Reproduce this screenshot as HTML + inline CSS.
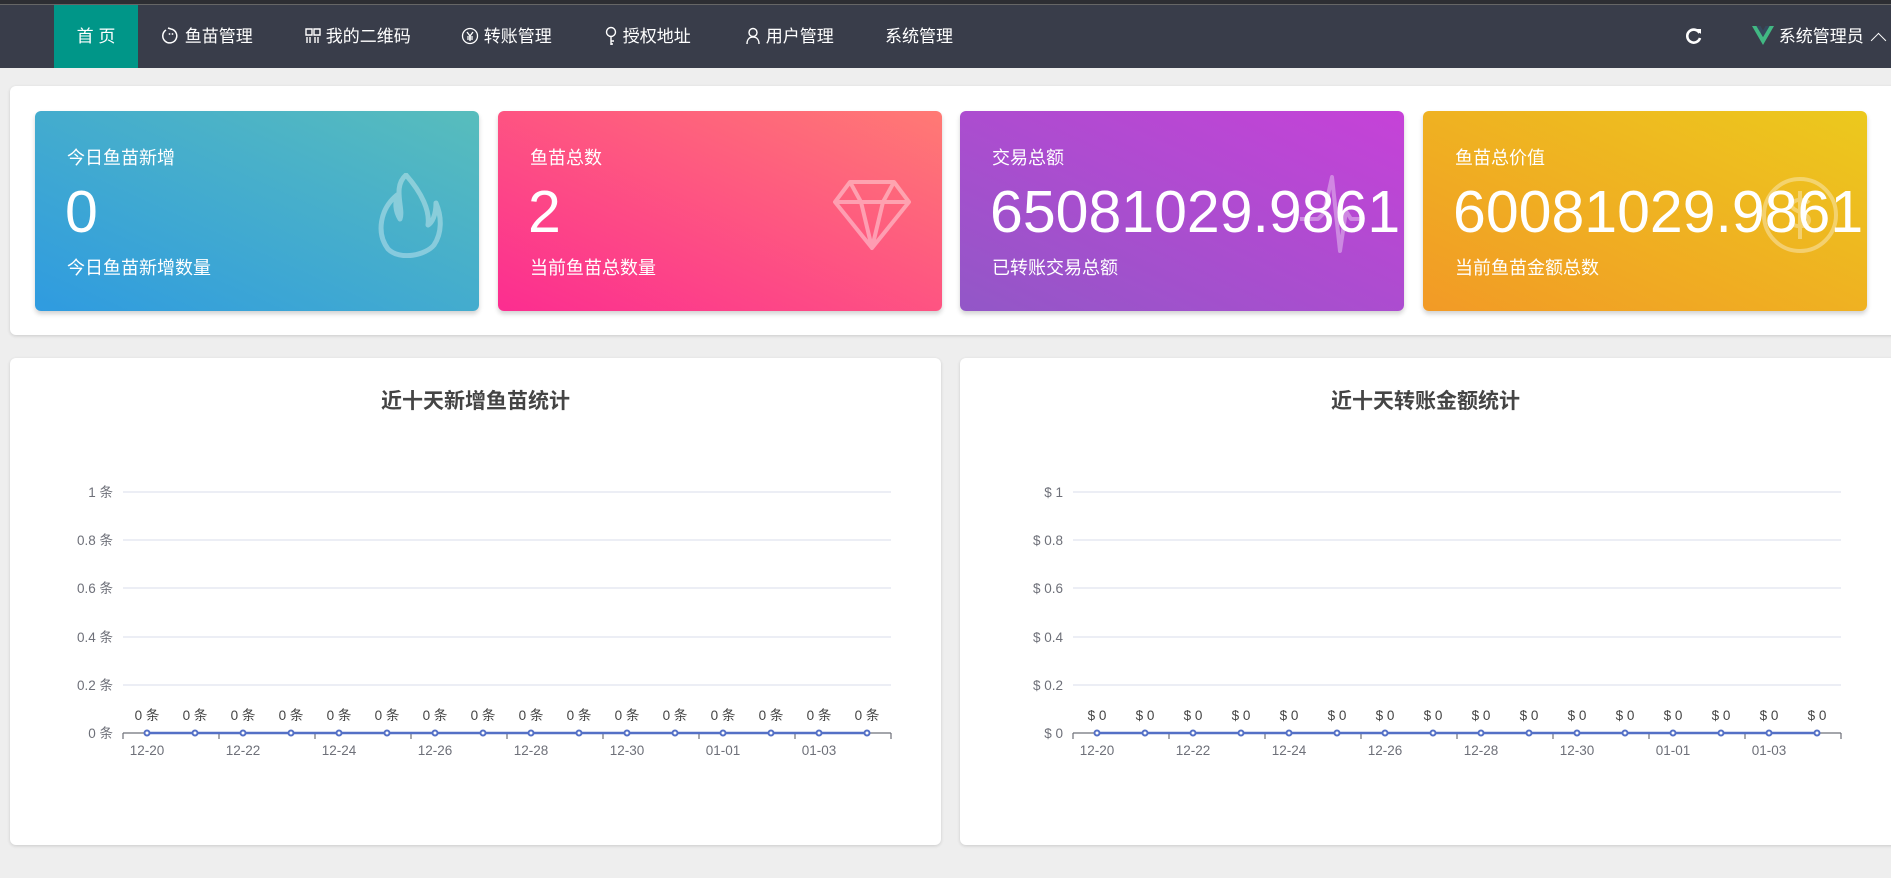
<!DOCTYPE html>
<html><head><meta charset="utf-8"><style>
*{margin:0;padding:0;box-sizing:border-box}
body{width:1891px;height:878px;background:#eeeeee;font-family:"Liberation Sans","Noto Sans CJK SC",sans-serif;position:relative;overflow:hidden}
.top{position:absolute;left:0;top:0;width:1891px;height:5px;background:#2d2e33;border-bottom:1px solid #666}
.nav{position:absolute;left:0;top:5px;width:1891px;height:63px;background:#393d4a;color:#fff;font-size:17px}
.nav .it{position:absolute;top:0;height:63px;line-height:63px;white-space:nowrap}
.home{left:54px;width:84px;background:#009688;text-align:center}
.panel{position:absolute;background:#fff;border-radius:6px;box-shadow:0 1px 3px rgba(0,0,0,.15)}
.card{position:absolute;top:111px;width:444px;height:200px;border-radius:6px;color:#fff;box-shadow:0 3px 5px rgba(0,0,0,.18);overflow:hidden}
.card .t{position:absolute;left:32px;top:33px;font-size:18px}
.card .n{position:absolute;left:30px;top:66px;font-size:59px;line-height:70px;white-space:nowrap}
.card .s{position:absolute;left:32px;top:143px;font-size:18px}
.card svg{position:absolute}
.ct{position:absolute;top:27px;width:100%;text-align:center;font-size:21px;font-weight:bold;color:#444}
.chart{position:absolute;left:0;top:0}
</style></head><body>
<div class="top"></div>
<div class="nav">
<div class="it home">首 页</div>
<div class="it" style="left:162px"><svg width="18" height="18" viewBox="0 0 18 18" style="vertical-align:-3px"><path d="M4 3A7 7 0 1 0 9 2M9 2L6 1" fill="none" stroke="#fff" stroke-width="1.5"/><circle cx="7.5" cy="7" r=".9" fill="#fff"/><circle cx="10.5" cy="7" r=".9" fill="#fff"/></svg> 鱼苗管理</div>
<div class="it" style="left:305px"><svg width="16" height="16" viewBox="0 0 16 16" style="vertical-align:-2px"><path d="M1 1h6v6H1zM9 1h6v6H9zM2 9v6M5 9v6M10 9v6M13 9v6" fill="none" stroke="#fff" stroke-width="1.4"/></svg> 我的二维码</div>
<div class="it" style="left:461px"><svg width="18" height="18" viewBox="0 0 18 18" style="vertical-align:-3px"><circle cx="9" cy="9" r="7.5" fill="none" stroke="#fff" stroke-width="1.3"/><path d="M6 5l3 4 3-4M9 9v5M6 10h6M6 12h6" fill="none" stroke="#fff" stroke-width="1.3"/></svg> 转账管理</div>
<div class="it" style="left:604px"><svg width="14" height="20" viewBox="0 0 14 20" style="vertical-align:-4px"><circle cx="7" cy="6" r="4.5" fill="none" stroke="#fff" stroke-width="1.4"/><path d="M7 10.5V19M7 15h3M7 18h2" fill="none" stroke="#fff" stroke-width="1.4"/></svg> 授权地址</div>
<div class="it" style="left:745px"><svg width="16" height="18" viewBox="0 0 16 18" style="vertical-align:-3px"><circle cx="8" cy="5.5" r="4" fill="none" stroke="#fff" stroke-width="1.4"/><path d="M2 17c0-4 2-7 6-7s6 3 6 7" fill="none" stroke="#fff" stroke-width="1.4"/></svg> 用户管理</div>
<div class="it" style="left:885px">系统管理</div>
<div class="it" style="left:1684px"><svg width="20" height="20" viewBox="0 0 20 20" style="vertical-align:-4px"><path d="M15.5 7A6.5 6.5 0 1 0 16 12" fill="none" stroke="#fff" stroke-width="2.6"/><path d="M12 3l5 0 0 5z" fill="#fff"/></svg></div>
<div class="it" style="left:1752px"><svg width="22" height="20" viewBox="0 0 22 20" style="vertical-align:-4px"><path d="M0 0h4.5L11 11 17.5 0H22L11 19z" fill="#41b883"/><path d="M4.5 0h4L11 4.5 13.5 0h4L11 11z" fill="#35495e"/></svg> 系统管理员 <span style="display:inline-block;width:11px;height:11px;border-left:1.6px solid #fff;border-top:1.6px solid #fff;transform:rotate(45deg);margin-left:5px;vertical-align:-4px"></span></div>
</div>

<div class="panel" style="left:10px;top:86px;width:1895px;height:249px"></div>
<div class="card" style="left:35px;background:linear-gradient(to top right,#2f9be0,#58bdbc)">
<div class="t">今日鱼苗新增</div><div class="n">0</div><div class="s">今日鱼苗新增数量</div>
<svg style="left:337px;top:62px" width="74" height="85" viewBox="0 0 74 85"><path d="M34 2C20 14 32 36 28 46C22 36 24 28 25 22C8 36 4 60 16 76C28 88 54 82 62 72C70 60 70 44 64 30C64 42 60 50 56 52C58 38 50 20 34 2Z" fill="none" stroke="rgba(255,255,255,.35)" stroke-width="5" stroke-linejoin="round"/></svg>
</div>
<div class="card" style="left:498px;background:linear-gradient(to top right,#fc2d90,#ff7a74)">
<div class="t">鱼苗总数</div><div class="n">2</div><div class="s">当前鱼苗总数量</div>
<svg style="left:334px;top:68px" width="80" height="72" viewBox="0 0 80 72"><path d="M18 3h44l15 20-37 46L3 23zM3 23h74M18 3l11 20 11 46 11-46 11-20" fill="none" stroke="rgba(255,255,255,.4)" stroke-width="4" stroke-linejoin="round"/></svg>
</div>
<div class="card" style="left:960px;background:linear-gradient(to top right,#9257c7,#c642d8)">
<div class="t">交易总额</div><div class="n">65081029.9861</div><div class="s">已转账交易总额</div>
<svg style="left:340px;top:64px" width="60" height="80" viewBox="0 0 60 80"><path d="M0 44h18l6-6 8-36 8 74 6-40 5 8h9" fill="none" stroke="rgba(255,255,255,.35)" stroke-width="4" stroke-linejoin="round"/></svg>
</div>
<div class="card" style="left:1423px;background:linear-gradient(to top right,#f29a26,#ecc91d)">
<div class="t">鱼苗总价值</div><div class="n">60081029.9861</div><div class="s">当前鱼苗金额总数</div>
<svg style="left:338px;top:64px" width="78" height="80" viewBox="0 0 78 80"><circle cx="39" cy="40" r="36" fill="none" stroke="rgba(255,255,255,.35)" stroke-width="4"/><path d="M48 28c-3-4-16-5-17 2s17 7 17 15-15 8-19 2M39 16v48" fill="none" stroke="rgba(255,255,255,.35)" stroke-width="4"/></svg>
</div>

<div class="panel" style="left:10px;top:358px;width:931px;height:487px">
<div class="ct">近十天新增鱼苗统计</div>
<svg class="chart" width="931" height="487" font-family="Liberation Sans,Noto Sans CJK SC,sans-serif" font-size="13.5" fill="#6e7079">
<g stroke="#e6e9f2" stroke-width="1.5"><path d="M113 134H881M113 182H881M113 230H881M113 279H881M113 327H881"/></g>
<g text-anchor="end"><text x="103" y="139">1 条</text><text x="103" y="187">0.8 条</text><text x="103" y="235">0.6 条</text><text x="103" y="284">0.4 条</text><text x="103" y="332">0.2 条</text><text x="103" y="380">0 条</text></g>
<path d="M113 375H881M113 375v6M209 375v6M305 375v6M401 375v6M497 375v6M593 375v6M689 375v6M785 375v6M881 375v6" stroke="#6e7079" stroke-width="1.2"/>
<path d="M137 375H857" stroke="#5470c6" stroke-width="2.5"/>
<g fill="#fff" stroke="#5470c6" stroke-width="2"><circle cx="137" cy="375" r="2.5"/><circle cx="185" cy="375" r="2.5"/><circle cx="233" cy="375" r="2.5"/><circle cx="281" cy="375" r="2.5"/><circle cx="329" cy="375" r="2.5"/><circle cx="377" cy="375" r="2.5"/><circle cx="425" cy="375" r="2.5"/><circle cx="473" cy="375" r="2.5"/><circle cx="521" cy="375" r="2.5"/><circle cx="569" cy="375" r="2.5"/><circle cx="617" cy="375" r="2.5"/><circle cx="665" cy="375" r="2.5"/><circle cx="713" cy="375" r="2.5"/><circle cx="761" cy="375" r="2.5"/><circle cx="809" cy="375" r="2.5"/><circle cx="857" cy="375" r="2.5"/></g>
<g text-anchor="middle" fill="#444"><text x="137" y="362">0 条</text><text x="185" y="362">0 条</text><text x="233" y="362">0 条</text><text x="281" y="362">0 条</text><text x="329" y="362">0 条</text><text x="377" y="362">0 条</text><text x="425" y="362">0 条</text><text x="473" y="362">0 条</text><text x="521" y="362">0 条</text><text x="569" y="362">0 条</text><text x="617" y="362">0 条</text><text x="665" y="362">0 条</text><text x="713" y="362">0 条</text><text x="761" y="362">0 条</text><text x="809" y="362">0 条</text><text x="857" y="362">0 条</text></g>
<g text-anchor="middle"><text x="137" y="397">12-20</text><text x="233" y="397">12-22</text><text x="329" y="397">12-24</text><text x="425" y="397">12-26</text><text x="521" y="397">12-28</text><text x="617" y="397">12-30</text><text x="713" y="397">01-01</text><text x="809" y="397">01-03</text></g>
</svg>
</div>

<div class="panel" style="left:960px;top:358px;width:940px;height:487px">
<div class="ct" style="width:931px">近十天转账金额统计</div>
<svg class="chart" width="931" height="487" font-family="Liberation Sans,Noto Sans CJK SC,sans-serif" font-size="13.5" fill="#6e7079">
<g stroke="#e6e9f2" stroke-width="1.5"><path d="M113 134H881M113 182H881M113 230H881M113 279H881M113 327H881"/></g>
<g text-anchor="end"><text x="103" y="139">$ 1</text><text x="103" y="187">$ 0.8</text><text x="103" y="235">$ 0.6</text><text x="103" y="284">$ 0.4</text><text x="103" y="332">$ 0.2</text><text x="103" y="380">$ 0</text></g>
<path d="M113 375H881M113 375v6M209 375v6M305 375v6M401 375v6M497 375v6M593 375v6M689 375v6M785 375v6M881 375v6" stroke="#6e7079" stroke-width="1.2"/>
<path d="M137 375H857" stroke="#5470c6" stroke-width="2.5"/>
<g fill="#fff" stroke="#5470c6" stroke-width="2"><circle cx="137" cy="375" r="2.5"/><circle cx="185" cy="375" r="2.5"/><circle cx="233" cy="375" r="2.5"/><circle cx="281" cy="375" r="2.5"/><circle cx="329" cy="375" r="2.5"/><circle cx="377" cy="375" r="2.5"/><circle cx="425" cy="375" r="2.5"/><circle cx="473" cy="375" r="2.5"/><circle cx="521" cy="375" r="2.5"/><circle cx="569" cy="375" r="2.5"/><circle cx="617" cy="375" r="2.5"/><circle cx="665" cy="375" r="2.5"/><circle cx="713" cy="375" r="2.5"/><circle cx="761" cy="375" r="2.5"/><circle cx="809" cy="375" r="2.5"/><circle cx="857" cy="375" r="2.5"/></g>
<g text-anchor="middle" fill="#444"><text x="137" y="362">$ 0</text><text x="185" y="362">$ 0</text><text x="233" y="362">$ 0</text><text x="281" y="362">$ 0</text><text x="329" y="362">$ 0</text><text x="377" y="362">$ 0</text><text x="425" y="362">$ 0</text><text x="473" y="362">$ 0</text><text x="521" y="362">$ 0</text><text x="569" y="362">$ 0</text><text x="617" y="362">$ 0</text><text x="665" y="362">$ 0</text><text x="713" y="362">$ 0</text><text x="761" y="362">$ 0</text><text x="809" y="362">$ 0</text><text x="857" y="362">$ 0</text></g>
<g text-anchor="middle"><text x="137" y="397">12-20</text><text x="233" y="397">12-22</text><text x="329" y="397">12-24</text><text x="425" y="397">12-26</text><text x="521" y="397">12-28</text><text x="617" y="397">12-30</text><text x="713" y="397">01-01</text><text x="809" y="397">01-03</text></g>
</svg>
</div>
</body></html>
